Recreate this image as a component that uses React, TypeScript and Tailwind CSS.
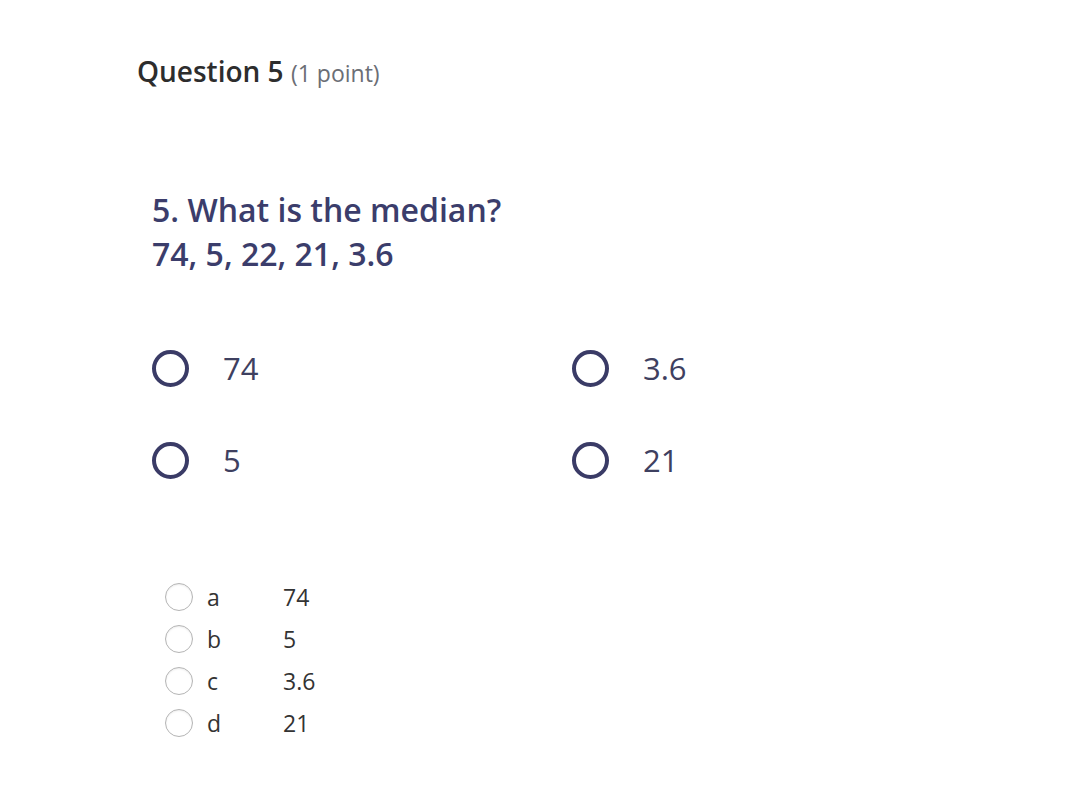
const choices = [
  { letter: "a", value: "74" },
  { letter: "b", value: "5" },
  { letter: "c", value: "3.6" },
  { letter: "d", value: "21" },
];

const imageOptions = [
  ["74", "3.6"],
  ["5", "21"],
];

function BigRadio() {
  return <span className="block w-[37px] h-[37px] rounded-full border-[4px] border-[#3a3b66] shrink-0" />;
}

export default function App() {
  return (
    <div className="w-[1088px] h-[794px] bg-white font-['Open_Sans',sans-serif] text-[#333]">
      <div className="pl-[137px] pt-[53px]">
        <h2 className="text-[28px] leading-[36px] font-semibold text-[#2d2d2d]">
          Question 5{" "}
          <span className="text-[23px] font-normal text-[#6b6e75]">(1 point)</span>
        </h2>

        {/* question image */}
        <div className="pl-[15px] pt-[97px] text-[#3b3d6b]">
          <p className="text-[32px] leading-[44px] font-semibold">5. What is the median?</p>
          <p className="text-[32px] leading-[44px] font-semibold">74, 5, 22, 21, 3.6</p>

          <div className="mt-[74px] grid grid-cols-[420px_200px] gap-y-[55px] text-[#3e4060]">
            {imageOptions.flat().map((opt) => (
              <div key={opt} className="flex items-center gap-[34px] h-[37px]">
                <BigRadio />
                <span className="text-[31px]">{opt}</span>
              </div>
            ))}
          </div>
        </div>

        <div className="pl-[28px] pt-[104px] flex flex-col gap-[14px]">
          {choices.map((c) => (
            <label key={c.letter} className="flex items-center h-[28px]">
              <span className="block w-[28px] h-[28px] rounded-full border border-[#b5b5b5] shadow-[inset_0_1px_2px_rgba(0,0,0,0.08)] shrink-0" />
              <span className="w-[90px] pl-[14px] text-[23px] text-[#333]">{c.letter}</span>
              <span className="text-[23px] text-[#333]">{c.value}</span>
            </label>
          ))}
        </div>
      </div>
    </div>
  );
}
